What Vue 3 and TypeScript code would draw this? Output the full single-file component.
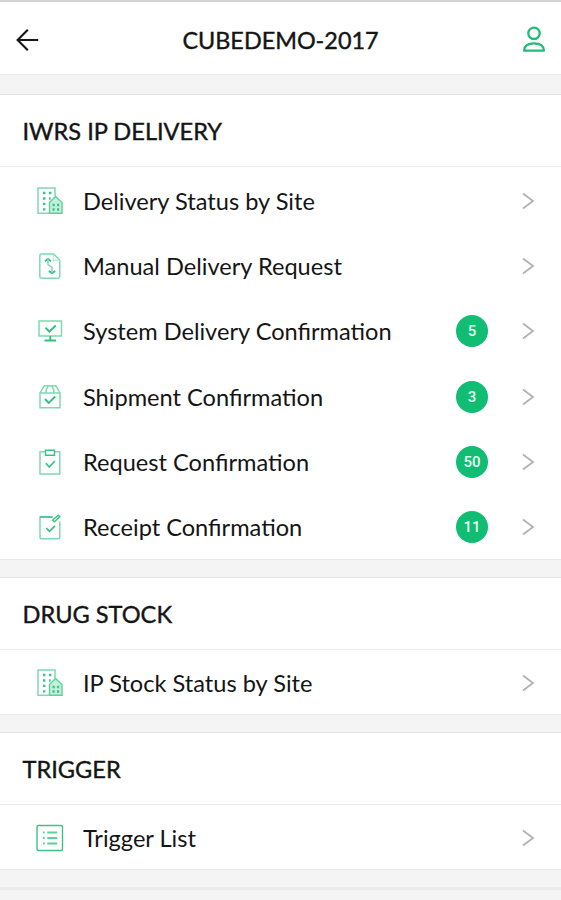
<script setup lang="ts">
type IconName = 'building' | 'transfer' | 'monitor' | 'box' | 'clipboard' | 'receipt' | 'list'

interface MenuItem {
  label: string
  icon: IconName
  count?: number
}

interface MenuSection {
  title: string
  items: MenuItem[]
}

const sections: MenuSection[] = [
  {
    title: 'IWRS IP DELIVERY',
    items: [
      { label: 'Delivery Status by Site', icon: 'building' },
      { label: 'Manual Delivery Request', icon: 'transfer' },
      { label: 'System Delivery Confirmation', icon: 'monitor', count: 5 },
      { label: 'Shipment Confirmation', icon: 'box', count: 3 },
      { label: 'Request Confirmation', icon: 'clipboard', count: 50 },
      { label: 'Receipt Confirmation', icon: 'receipt', count: 11 },
    ],
  },
  { title: 'DRUG STOCK', items: [{ label: 'IP Stock Status by Site', icon: 'building' }] },
  { title: 'TRIGGER', items: [{ label: 'Trigger List', icon: 'list' }] },
]
</script>

<template>
  <div class="screen">
    <header class="topbar">
      <button class="icon-button" aria-label="Back">
        <svg width="24" height="24" viewBox="0 0 24 24" fill="none" stroke="#161616" stroke-width="2.1">
          <path d="M23.2 12H2.8M12.8 1.8 2.6 12l10.2 10.2" />
        </svg>
      </button>
      <h1>CUBEDEMO-2017</h1>
      <button class="icon-button" aria-label="Account">
        <svg width="24" height="28" viewBox="0 0 24 28" fill="none" stroke="#1fbd76" stroke-width="2.3">
          <circle cx="12" cy="7.3" r="5.7" />
          <path d="M2.1 24.7c0-5 3.4-7.4 9.9-7.4s9.9 2.4 9.9 7.4z" stroke-linejoin="round" />
        </svg>
      </button>
    </header>

    <main>
      <section v-for="section in sections" :key="section.title" class="group">
        <h2>{{ section.title }}</h2>
        <ul>
          <li v-for="item in section.items" :key="item.label">
            <svg class="icon" width="30" height="30" viewBox="0 0 30 30" fill="none">
              <g v-if="item.icon === 'building'">
                <path class="soft" d="M15.5 27.2H3V2h17v8" />
                <path class="tint" d="M14.5 27.2V16.5l6-6 6.5 6v10.7z" />
                <path class="dots" d="M8 7h2.4M14 7h2.4M8 12.5h2.4M8 17.9h2.4M8 23.3h2.4M14 12.5h1.6" />
                <path class="dots" d="M17.5 19h2.2M22 19h2.2M17.5 23.5h2.2M22 23.5h2.2" />
              </g>
              <g v-else-if="item.icon === 'transfer'">
                <path class="soft" d="M6.5 3h12.3l6 6.2v16.3q0 1.7-1.7 1.7H6.5q-1.7 0-1.7-1.7V4.7Q4.8 3 6.5 3z" />
                <path class="faint" d="M18.4 3.5v5.8h6" />
                <path class="strong" d="M10 10.2l3-2.2 3 2.2M13.8 20l3.2 2.2 3.2-2.2" />
                <path class="soft" d="M13 8v5.5l4 2.8v5.5" />
              </g>
              <g v-else-if="item.icon === 'monitor'">
                <path class="soft" d="M4 5h22.5v15H4z" />
                <path class="strong" d="M10.5 11.7l3.8 4 6.5-6.2M15.3 20v4M9.5 24.5h11.5" />
              </g>
              <g v-else-if="item.icon === 'box'">
                <path class="soft" d="M5 11v14.8h20V11zl3.5-6.2q.6-1 1.8-1h9.4q1.2 0 1.8 1L25 11M13.2 4q-2 2.5-2.4 6.8M16.8 4q2 2.5 2.4 6.8" />
                <path class="strong" d="M10 17l3.7 4 6.5-6.5" />
              </g>
              <g v-else-if="item.icon === 'clipboard'">
                <path class="soft" d="M10 4.7H5v22.3h19.8V4.7h-5" />
                <path class="outline" d="M10.5 3.3h9v5h-9z" />
                <path class="strong thin" d="M11 16.3l3.2 3.7 5.7-6" />
              </g>
              <g v-else-if="item.icon === 'receipt'">
                <path class="soft" d="M18 5H5v20q0 1.8 1.8 1.8H23q1.8 0 1.8-1.8V9.5" />
                <path class="outline" d="M5 5h12.5M17.5 8.2l5.8-5 1.6 1.6-5.5 5z" />
                <path class="strong thin" d="M11.3 16l3.2 3.3 5.5-5.4" />
              </g>
              <g v-else>
                <rect class="outline" x="2" y="2.5" width="25.5" height="25" rx="1.5" />
                <path class="list-lines" d="M8 9.5h1.8M8 15h1.8M8 20.5h1.8M12.2 9.5h10M12.2 15h10M12.2 20.5h10" />
              </g>
            </svg>
            <span class="label">{{ item.label }}</span>
            <span v-if="item.count" class="badge">{{ item.count }}</span>
            <svg class="chevron" width="14" height="18" viewBox="0 0 14 18" fill="none">
              <path d="M2 1.5 12 9 2 16.5" stroke="#b2b2b2" stroke-width="1.8" />
            </svg>
          </li>
        </ul>
      </section>
      <div class="next-edge"></div>
    </main>
  </div>
</template>

<style>
body {
  margin: 0;
  background: #f4f4f4;
}
</style>

<style scoped>
.screen {
  height: 900px;
  overflow: hidden;
  box-sizing: border-box;
  border-top: 2px solid #d4d4d4;
  background: #f4f4f4;
  color: #151515;
  font-family: Lato, Carlito, sans-serif;
}
.topbar {
  height: 73px;
  padding: 3px 15px 0;
  box-sizing: border-box;
  display: flex;
  align-items: center;
  justify-content: space-between;
  background: #fff;
  border-bottom: 1px solid #ebebeb;
}
.icon-button {
  display: flex;
  padding: 0;
  border: 0;
  background: none;
}
h1,
h2 {
  margin: 0;
  font-size: 23.6px;
  font-weight: 400;
  -webkit-text-stroke: 0.4px #151515;
}
h1 {
  font-size: 23.4px;
}
.group {
  margin-top: 19px;
  background: #fff;
  border-top: 1px solid #e2e2e2;
  border-bottom: 1px solid #e9e9e9;
}
.group + .group {
  margin-top: 17px;
}
h2 {
  height: 71px;
  padding-left: 22.5px;
  display: flex;
  align-items: center;
  border-bottom: 1px solid #ebebeb;
}
.group + .group h2 {
  height: 69px;
  padding-top: 2px;
}
ul {
  margin: 0;
  padding: 0;
  list-style: none;
}
li {
  height: 65.3px;
  box-sizing: border-box;
  padding: 2px 26px 0 35px;
  display: flex;
  align-items: center;
}
.group + .group li {
  height: 64px;
}
.label {
  flex: 1;
  margin-left: 18px;
  font-size: 23.6px;
  white-space: nowrap;
}
.badge {
  width: 32px;
  height: 32px;
  margin-right: 33px;
  display: flex;
  align-items: center;
  justify-content: center;
  border-radius: 50%;
  background: #10bd72;
  color: #e6fff3;
  font: 500 15px Roboto, sans-serif;
}
.icon path,
.icon rect {
  stroke: #39c487;
  stroke-width: 1.4;
}
.icon .soft {
  stroke: #7fd9b1;
  stroke-width: 1.5;
}
.icon .faint {
  stroke: #b8ead3;
}
.icon .tint {
  stroke: #5fcf9e;
  fill: #c3efdb;
}
.icon .dots {
  stroke-width: 2.3;
}
.icon .strong {
  stroke: #2fc182;
  stroke-width: 1.9;
}
.icon .thin {
  stroke-width: 1.6;
}
.icon .list-lines {
  stroke: #5fcf9e;
  stroke-width: 2;
}
.next-edge {
  margin-top: 17px;
  height: 3px;
  background: #ebebeb;
}
</style>
